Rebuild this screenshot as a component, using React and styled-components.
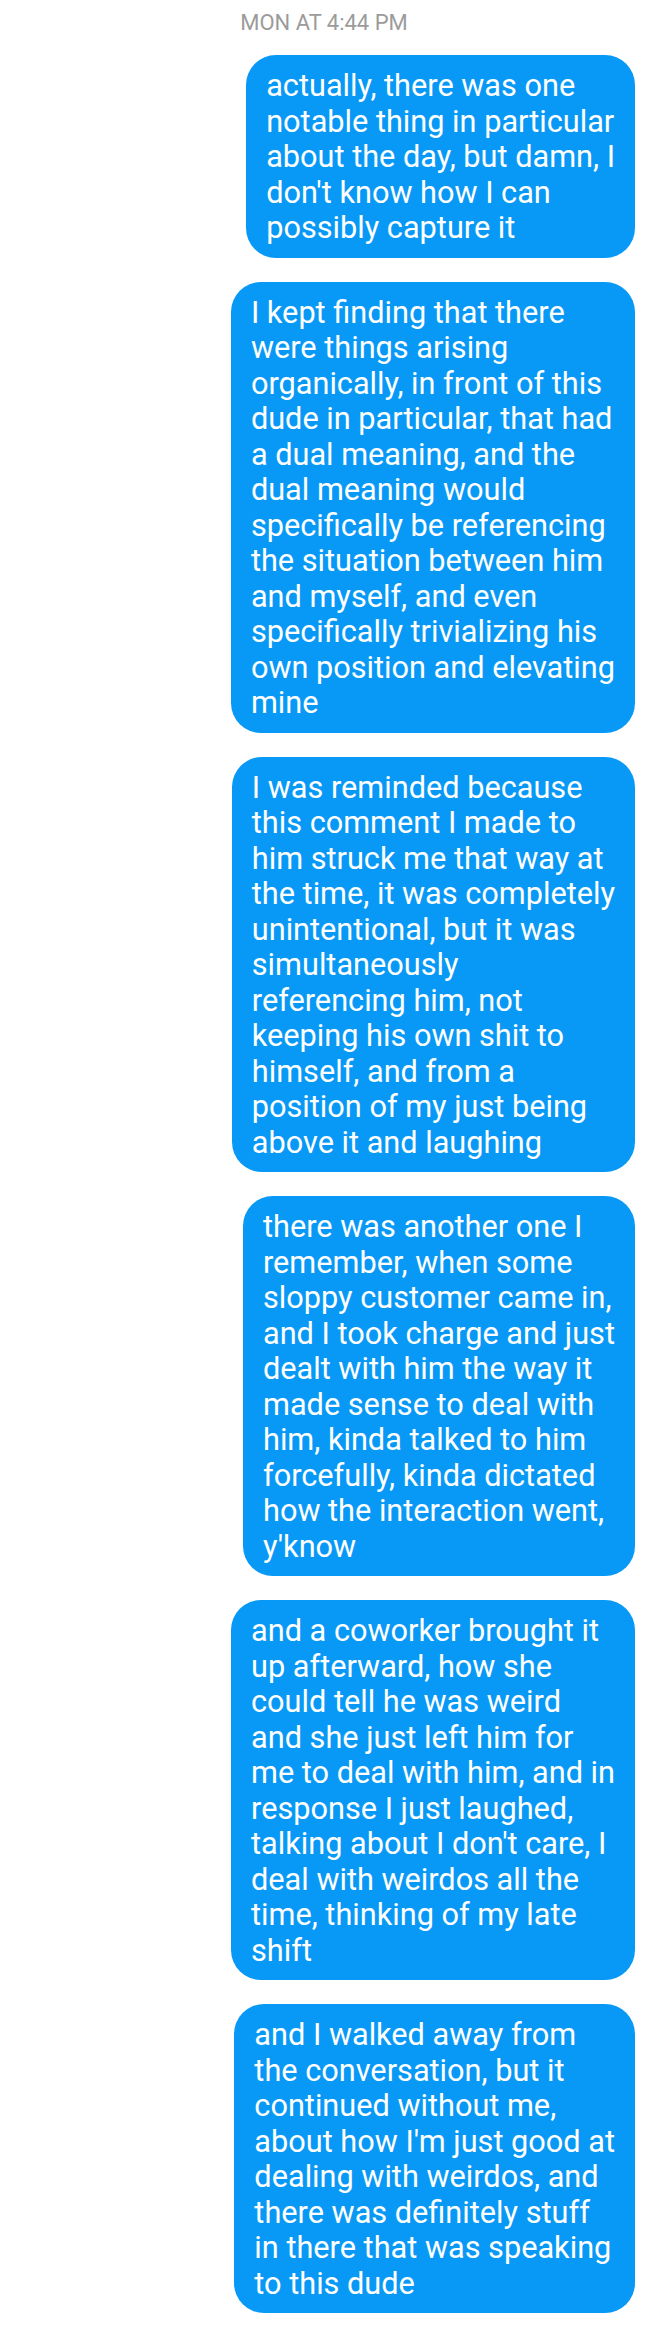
import React from 'react'
import styled, { createGlobalStyle } from 'styled-components'

const GlobalStyle = createGlobalStyle`
  html, body {
    margin: 0;
    padding: 0;
    background: #ffffff;
  }
  body {
    font-family: Roboto, "Noto Sans", sans-serif;
  }
`

const Thread = styled.div`
  width: 648px;
  display: flex;
  flex-direction: column;
  align-items: flex-end;
  padding: 0 13px 19px 0;
  box-sizing: border-box;
  gap: 24px;
`

const Stamp = styled.div`
  align-self: center;
  margin-left: 13px;
  height: 31px;
  line-height: 46px;
  font-size: 22px;
  color: #9b9b9b;
  text-transform: uppercase;
`

const Bubble = styled.div`
  background: #0899f7;
  color: #ffffff;
  border-radius: 30px;
  padding: 13px 20px 12px 20px;
  font-size: 30.7px;
  line-height: 35.5px;
`

const Line = styled.span`
  display: block;
  white-space: nowrap;
`

const messages = [
  [
    'actually, there was one',
    'notable thing in particular',
    'about the day, but damn, I',
    "don't know how I can",
    'possibly capture it',
  ],
  [
    'I kept finding that there',
    'were things arising',
    'organically, in front of this',
    'dude in particular, that had',
    'a dual meaning, and the',
    'dual meaning would',
    'specifically be referencing',
    'the situation between him',
    'and myself, and even',
    'specifically trivializing his',
    'own position and elevating',
    'mine',
  ],
  [
    'I was reminded because',
    'this comment I made to',
    'him struck me that way at',
    'the time, it was completely',
    'unintentional, but it was',
    'simultaneously',
    'referencing him, not',
    'keeping his own shit to',
    'himself, and from a',
    'position of my just being',
    'above it and laughing',
  ],
  [
    'there was another one I',
    'remember, when some',
    'sloppy customer came in,',
    'and I took charge and just',
    'dealt with him the way it',
    'made sense to deal with',
    'him, kinda talked to him',
    'forcefully, kinda dictated',
    'how the interaction went,',
    "y'know",
  ],
  [
    'and a coworker brought it',
    'up afterward, how she',
    'could tell he was weird',
    'and she just left him for',
    'me to deal with him, and in',
    'response I just laughed,',
    "talking about I don't care, I",
    'deal with weirdos all the',
    'time, thinking of my late',
    'shift',
  ],
  [
    'and I walked away from',
    'the conversation, but it',
    'continued without me,',
    "about how I'm just good at",
    'dealing with weirdos, and',
    'there was definitely stuff',
    'in there that was speaking',
    'to this dude',
  ],
]

export default function App() {
  return (
    <>
      <GlobalStyle />
      <Thread>
        <Stamp>Mon at 4:44 PM</Stamp>
        {messages.map((lines, i) => (
          <Bubble key={i}>
            {lines.map((l, j) => (
              <Line key={j}>{l}</Line>
            ))}
          </Bubble>
        ))}
      </Thread>
    </>
  )
}
